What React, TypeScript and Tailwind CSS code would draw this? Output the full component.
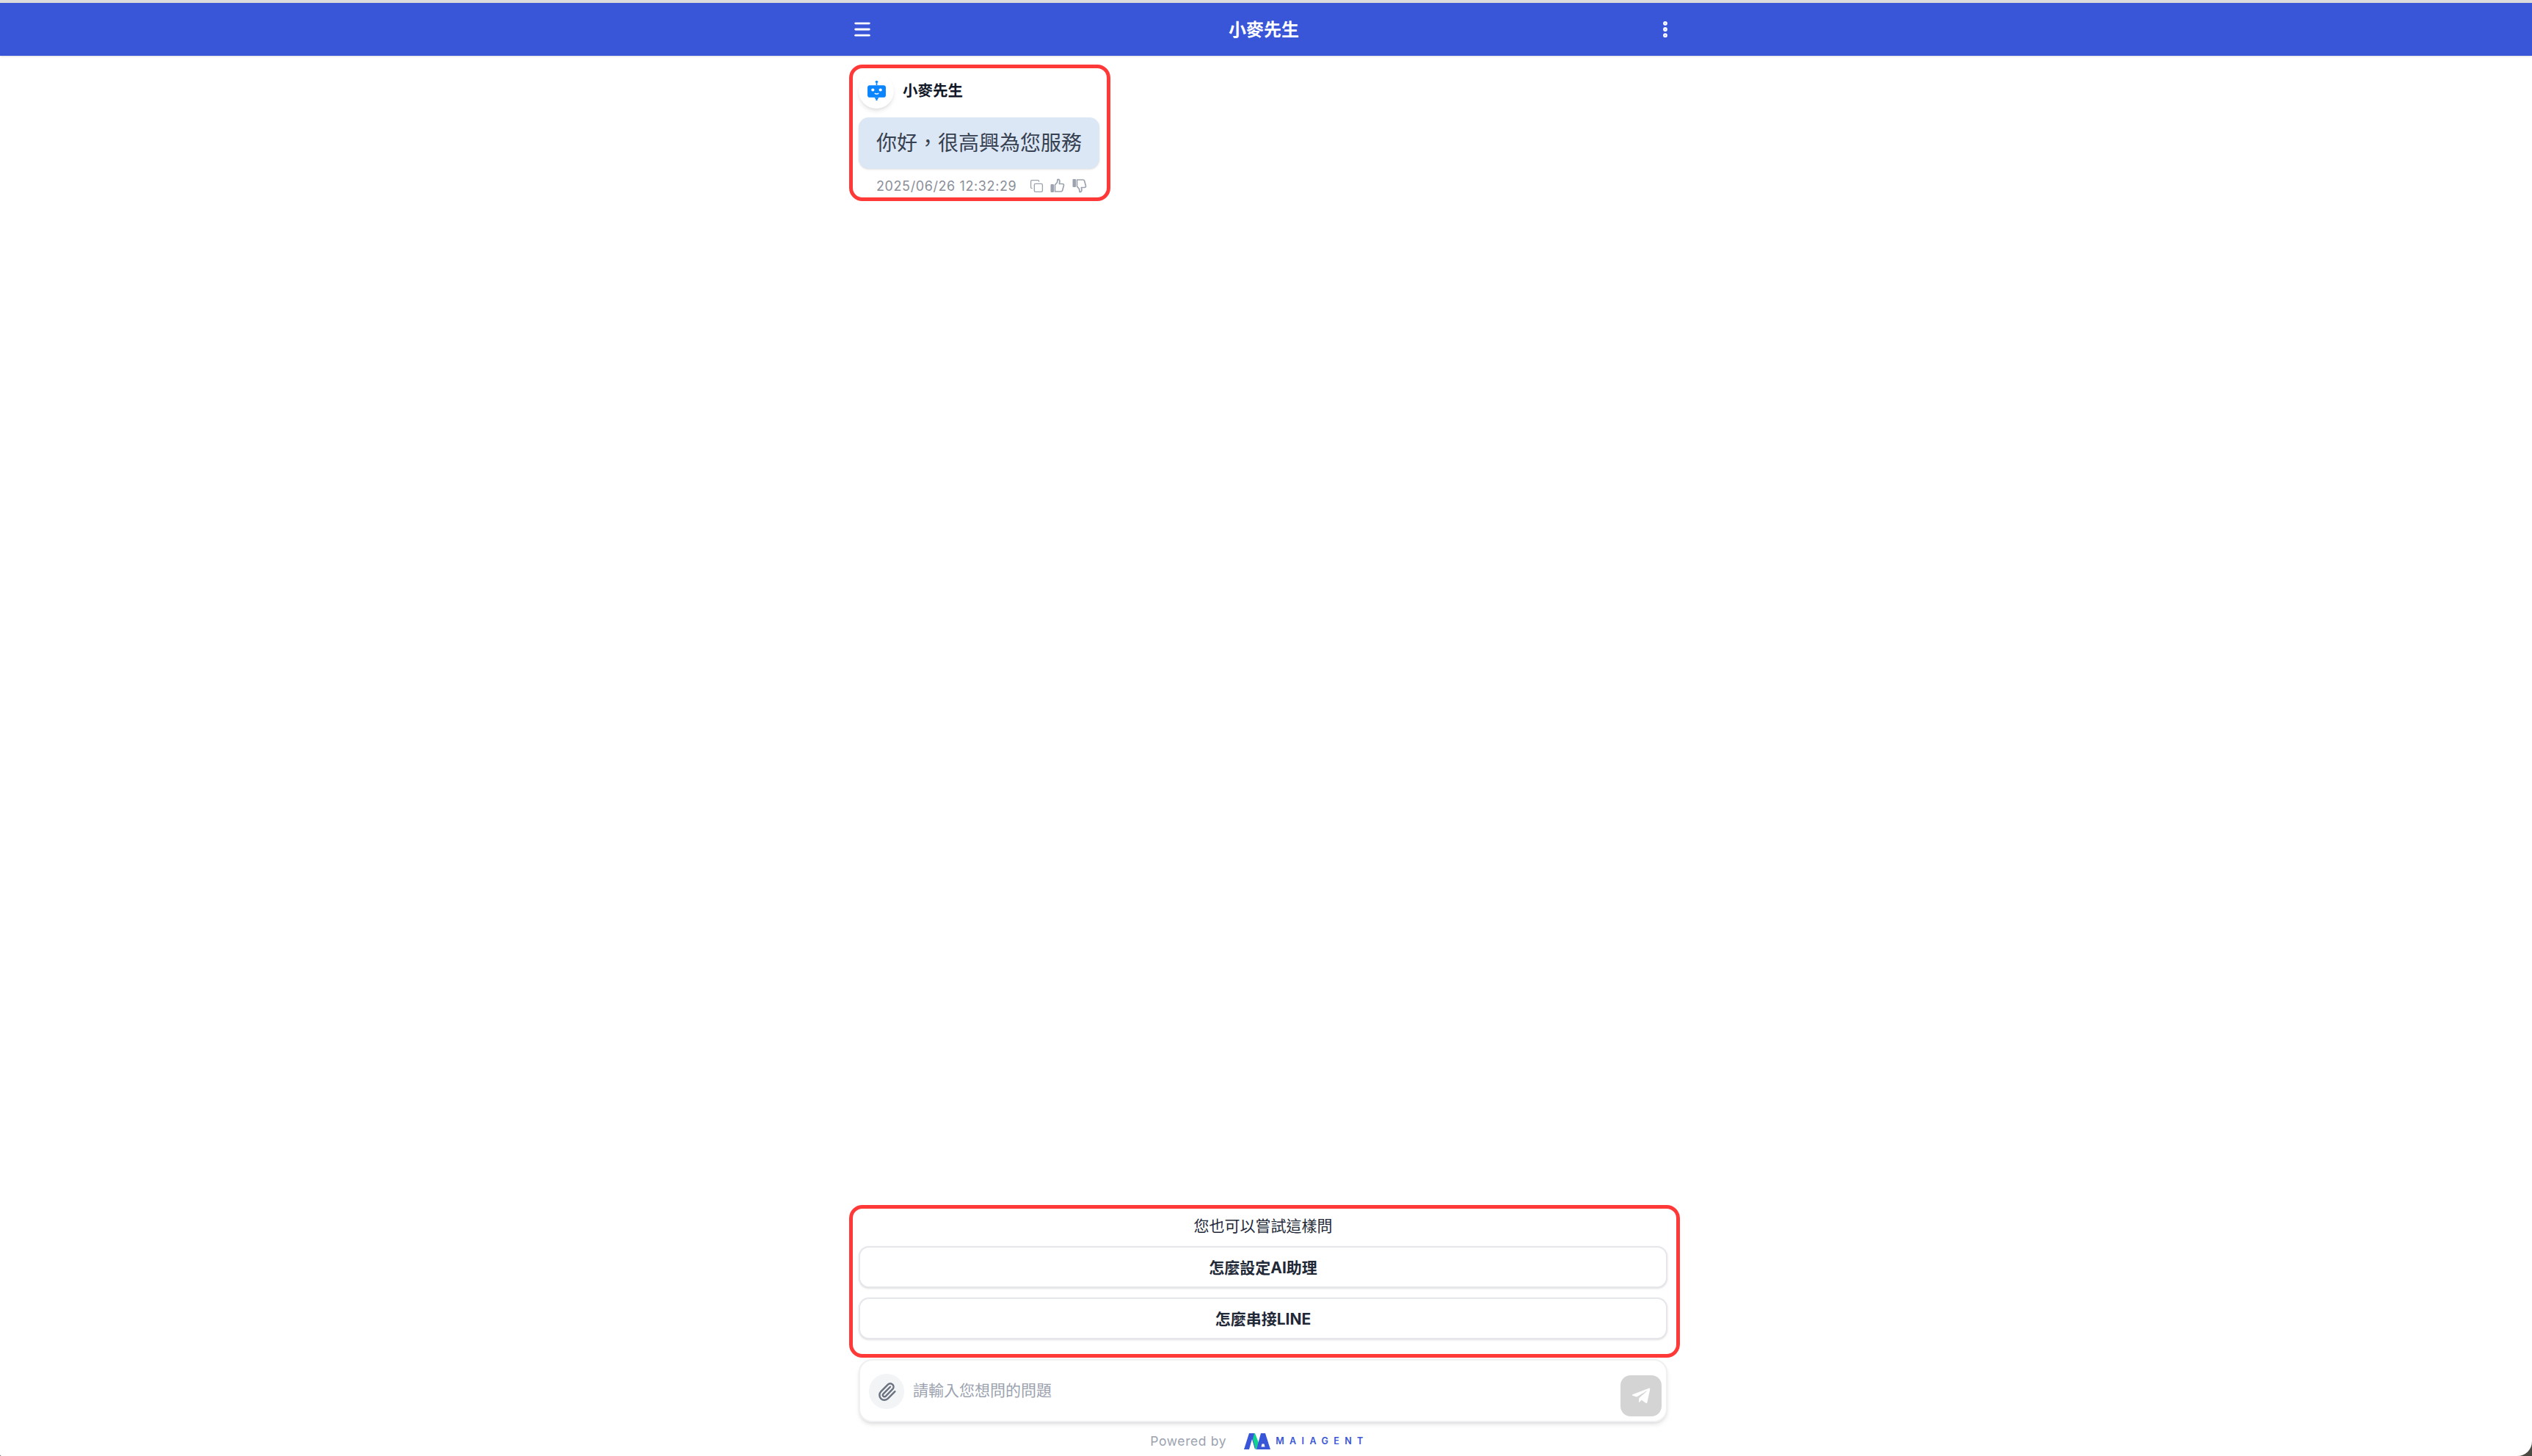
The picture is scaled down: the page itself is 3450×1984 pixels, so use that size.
import { Copy, EllipsisVertical, Menu, Paperclip } from 'lucide-react';
import { FaTelegramPlane } from 'react-icons/fa';

const FONT = "font-['Inter','Noto_Sans_CJK_TC',sans-serif]";

const suggestions = ['怎麼設定AI助理', '怎麼串接LINE'];

function RobotIcon() {
  return (
    <svg viewBox="0 0 24 26" className="-mt-[2px] h-[27px] w-[25px]">
      <rect x="11.2" y="0" width="1.6" height="6" fill="#0a84ff" />
      <rect x="10.2" y="0.6" width="3.6" height="1.8" fill="#0a84ff" />
      <rect x="0" y="6" width="24" height="16" rx="3" fill="#0a84ff" />
      <path d="M9 22h6l-2 2.5v1.5h-2v-1.5z" fill="#0a84ff" />
      <circle cx="7" cy="12" r="2" fill="#fff" />
      <circle cx="17" cy="12" r="2" fill="#fff" />
      <path d="M9.5 16.2c1 1.6 4 1.6 5 0" stroke="#fff" strokeWidth="1.5" fill="none" />
    </svg>
  );
}

function ThumbIcon({ down }: { down?: boolean }) {
  return (
    <svg viewBox="0 0 20 20" className={`h-[20px] w-[20px] ${down ? 'rotate-180 -scale-x-100' : ''}`}>
      <rect x="0.5" y="8" width="4.5" height="11" rx="1" fill="#9ca3af" />
      <path
        d="M6.5 9l3-3.5.6-4c1.8-.3 3 1 2.8 3l-.5 3h4.2c1.4 0 2.2 1.2 1.8 2.5l-1.7 6.2c-.3 1.1-1.1 1.8-2.2 1.8H6.5z"
        fill="none"
        stroke="#9ca3af"
        strokeWidth="1.7"
        strokeLinejoin="round"
      />
    </svg>
  );
}

function MaiLogo() {
  return (
    <svg viewBox="0 0 36 22" className="h-[22px] w-[36px]">
      <path d="M0 22 7 0h7l4 14-3 8-4-14-4 14z" fill="#3955d8" />
      <path d="M14 0h1l5 13-3 9h-1l-4-14z" fill="#10d48e" />
      <path d="M17 22l6-22h6l7 22z" fill="#3955d8" />
      <path d="M24.5 14.5h3l1 4h-5z" fill="#fff" />
    </svg>
  );
}

export default function App() {
  return (
    <div className={`h-screen overflow-hidden bg-[#4a4a42] ${FONT}`}>
      <div className="flex h-full flex-col rounded-br-[20px] rounded-bl-[2px] bg-white pr-[8px]">
        <div className="-mr-[8px] h-[4px] shrink-0 bg-[#dcdcdc]" />
        <header className="-mr-[8px] flex h-[72px] shrink-0 bg-[#3955d8] pr-[8px] shadow-sm">
          <div className="mx-auto flex w-[1102px] items-center justify-between text-white">
            <Menu className="-ml-[9px] h-[28px] w-[28px]" strokeWidth={2.4} />
            <span className="pt-[1px] text-[24px] font-semibold">小麥先生</span>
            <EllipsisVertical className="-mr-[11px] h-[28px] w-[28px]" strokeWidth={3} />
          </div>
        </header>

        <main className="mx-auto flex w-[1102px] flex-1 flex-col justify-between">
          <div className="mt-[12px] -ml-[13px] h-[186px] w-[356px] rounded-[18px] border-[5px] border-[#ff3838] pt-[7px] pr-[10px] pl-[8px]">
            <div className="flex items-center gap-[12px]">
              <div className="flex h-[48px] w-[48px] items-center justify-center rounded-full bg-white shadow-md">
                <RobotIcon />
              </div>
              <span className="pt-[1px] text-[20.5px] font-semibold text-[#111827]">小麥先生</span>
            </div>
            <div className="mt-[12px] flex h-[70px] items-center justify-center rounded-[14px] bg-[#dce7f5] text-[28px] text-[#374151] shadow-sm">
              你好，很高興為您服務
            </div>
            <div className="mt-[14px] flex h-[18px] items-center pl-[24px] text-[#9ca3af]">
              <span className="text-[18px] tracking-[0.6px] text-[#8b8f99]">2025/06/26 12:32:29</span>
              <Copy className="ml-[18px] h-[19px] w-[19px]" strokeWidth={1.7} />
              <span className="ml-[9px]"><ThumbIcon /></span>
              <span className="ml-[10px]"><ThumbIcon down /></span>
            </div>
          </div>

          <div>
            <div className="-mr-[17px] -ml-[13px] flex flex-col gap-[13px] rounded-[18px] border-[5px] border-[#ff3838] pr-[12px] pb-[20px] pl-[8px]">
              <p className="-mb-[13px] h-[51px] pt-[9px] text-center text-[21px] leading-[30px] text-[#1f2937]">
                您也可以嘗試這樣問
              </p>
              {suggestions.map((s) => (
                <button
                  key={s}
                  className="h-[57px] rounded-[14px] border-2 border-[#e5e7eb] bg-white pt-[2px] text-[21px] font-bold text-[#1f2937] shadow-sm"
                >
                  {s}
                </button>
              ))}
            </div>

            <div className="mt-[2px] flex h-[86px] items-start rounded-[18px] border-2 border-[#f0f0f2] bg-white pt-[18px] pr-[6px] pl-[12px] shadow-md">
              <div className="flex h-[48px] w-[48px] shrink-0 items-center justify-center rounded-full bg-[#f3f4f6]">
                <Paperclip className="h-[27px] w-[27px] text-[#6b7280]" strokeWidth={2.2} />
              </div>
              <span className="ml-[12px] flex-1 pt-[8px] text-[21px] leading-[30px] text-[#9ca3af]">請輸入您想問的問題</span>
              <div className="mt-[2px] flex h-[56px] w-[56px] items-center justify-center rounded-[14px] bg-[#d4d4d4]">
                <FaTelegramPlane className="h-[28px] w-[28px] text-white" />
              </div>
            </div>

            <footer className="flex h-[46px] items-center justify-center pt-[6px] pr-[10px] text-[17.5px] tracking-[0.6px] text-[#9ca3af]">
              <span>Powered by</span>
              <span className="ml-[24px]"><MaiLogo /></span>
              <span className="ml-[7px] pt-[1px] text-[12.5px] font-semibold tracking-[7.4px] text-[#3955d8]">MAIAGENT</span>
            </footer>
          </div>
        </main>
      </div>
    </div>
  );
}
